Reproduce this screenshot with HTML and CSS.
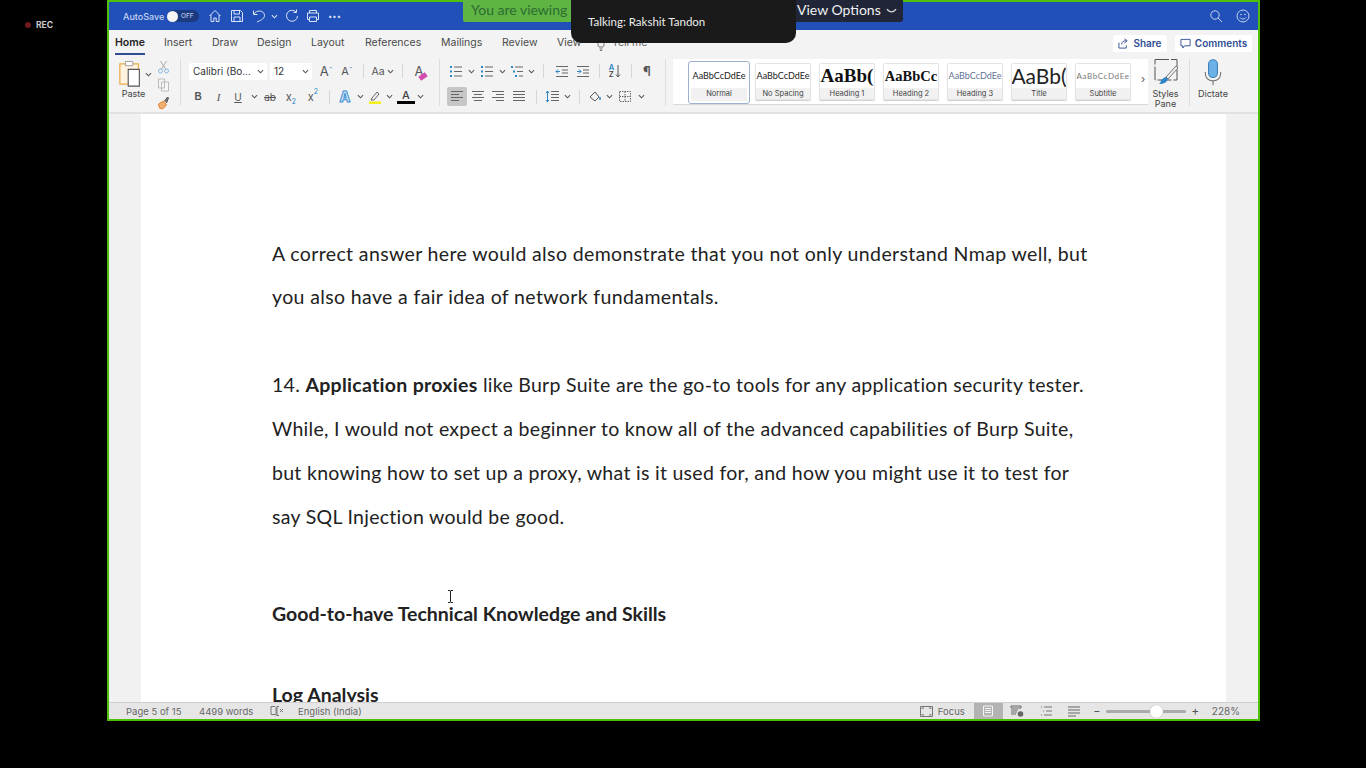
FILE: index.html
```html
<!DOCTYPE html>
<html lang="en">
<head>
<meta charset="utf-8">
<title>Word</title>
<link rel="stylesheet" href="styles.css">
</head>
<body>
<svg class="defs" width="0" height="0">
  <defs>
    <symbol id="chev" viewBox="0 0 8 5"><path d="M1 1l3 3 3-3" fill="none" stroke="#555" stroke-width="1.2"/></symbol>
    <symbol id="lines-left" viewBox="0 0 14 13"><path d="M1 1.500h12M1 4.500h8M1 7.500h12M1 10.500h8" fill="none" stroke="#666" stroke-width="1"/></symbol>
    <symbol id="lines-center" viewBox="0 0 14 13"><path d="M1 1.500h12M3 4.500h8M1 7.500h12M3 10.500h8" fill="none" stroke="#666" stroke-width="1"/></symbol>
    <symbol id="lines-right" viewBox="0 0 14 13"><path d="M1 1.500h12M5 4.500h8M1 7.500h12M5 10.500h8" fill="none" stroke="#666" stroke-width="1"/></symbol>
    <symbol id="lines-just" viewBox="0 0 14 13"><path d="M1 1.500h12M1 4.500h12M1 7.500h12M1 10.500h12" fill="none" stroke="#666" stroke-width="1"/></symbol>
  </defs>
</svg>
<div class="rec"><span class="rec-dot"></span>REC</div>
<main class="window">
  <header class="titlebar">
    <span class="autosave">AutoSave</span>
    <span class="toggle"><span class="knob"></span><span class="off">OFF</span></span>
    <svg class="ti ti-home" viewBox="0 0 14 14"><path d="M1.500 7L7 1.500 12.500 7M3 6v6.500h2.800V9h2.400v3.500H11V6" fill="none" stroke="#dbe4f7" stroke-width="1"/></svg>
    <svg class="ti ti-save" viewBox="0 0 14 14"><path d="M1.500 1.500h9l2 2v9h-11zM4 1.500v3.500h5.500v-3.500M4 12.500v-4.500h6v4.500" fill="none" stroke="#dbe4f7" stroke-width="1"/></svg>
    <svg class="ti ti-undo" viewBox="0 0 14 14"><path d="M1.500 1.500v4h4M1.700 5.300C3 3 5 2 7.500 2c3 0 5 2 5 4.500S10 11 5 13" fill="none" stroke="#dbe4f7" stroke-width="1"/></svg>
    <svg class="ti-chev" viewBox="0 0 8 5"><path d="M1 1l3 3 3-3" fill="none" stroke="#dbe4f7" stroke-width="1.200"/></svg>
    <svg class="ti ti-redo" viewBox="0 0 14 14"><path d="M11 3A5.500 5.500 0 1 0 12.500 7M11.500 .5V3.500H8.500" fill="none" stroke="#dbe4f7" stroke-width="1"/></svg>
    <svg class="ti ti-print" viewBox="0 0 14 14"><path d="M3.500 4V1.500h7V4M3.500 10.500H1.500V4h11v6.500h-2M3.500 8h7v4.500h-7z" fill="none" stroke="#dbe4f7" stroke-width="1"/></svg>
    <span class="dots">···</span>
    <span class="spacer"></span>
    <svg class="ti ti-search" viewBox="0 0 14 14"><circle cx="6" cy="6" r="4.200" fill="none" stroke="#c5d3ef" stroke-width="1"/><path d="M9 9l4 4" stroke="#c5d3ef" stroke-width="1"/></svg>
    <svg class="ti ti-smile" viewBox="0 0 14 14"><circle cx="7" cy="7" r="6" fill="none" stroke="#c5d3ef" stroke-width="1"/><circle cx="5" cy="5.500" r=".8" fill="#c5d3ef"/><circle cx="9" cy="5.500" r=".8" fill="#c5d3ef"/><path d="M4 8.500c1.500 2 4.500 2 6 0" fill="none" stroke="#c5d3ef"/></svg>
  </header>

  <nav class="tabs">
    <span class="tab tab-home">Home</span>
    <span class="tab tab-insert">Insert</span>
    <span class="tab tab-draw">Draw</span>
    <span class="tab tab-design">Design</span>
    <span class="tab tab-layout">Layout</span>
    <span class="tab tab-ref">References</span>
    <span class="tab tab-mail">Mailings</span>
    <span class="tab tab-review">Review</span>
    <span class="tab tab-view">View</span>
    <svg class="bulb" viewBox="0 0 8 12"><path d="M2 8C0 6 1 1 4 1s4 5 2 7zM2.500 10h3M3 11.500h2" fill="none" stroke="#777"/></svg>
    <span class="tab tab-tell">Tell me</span>
    <span class="spacer"></span>
    <span class="action share">
      <svg class="a-ic" viewBox="0 0 12 12"><path d="M1 5v6h8V8M4 7c0-3 2-4 5-4M7 1l3 2-3 2.500" fill="none" stroke="#2f4d92" stroke-width="1"/></svg>Share</span>
    <span class="action comments">
      <svg class="a-ic" viewBox="0 0 12 12"><path d="M1 1.500h10v7H5L3 11V8.500H1z" fill="none" stroke="#2f4d92" stroke-width="1"/></svg>Comments</span>
  </nav>

  <section class="ribbon">
    <div class="g-paste">
      <div class="paste-main">
        <div class="paste-top">
          <svg class="paste-ic" viewBox="0 0 28 30">
            <path d="M2 4h20v22H2z" fill="#fff3df" stroke="#eca94a" stroke-width="1.300"/>
            <path d="M8 1.500h8V6H8z" fill="#fff" stroke="#999"/>
            <path d="M11 10h12v18H11z" fill="#fff" stroke="#555" stroke-width="1.200"/>
          </svg>
          <svg class="chev chev-paste"><use href="#chev"/></svg>
        </div>
        <span class="paste-label">Paste</span>
      </div>
      <div class="paste-tools">
        <svg class="pt" viewBox="0 0 12 14"><path d="M3 1l5 8M9 1L4 9" stroke="#aaa" fill="none"/><circle cx="3" cy="11" r="2" fill="none" stroke="#8ab6e0"/><circle cx="9" cy="11" r="2" fill="none" stroke="#8ab6e0"/></svg>
        <svg class="pt" viewBox="0 0 12 14"><path d="M1 1h6v9H1zM4 4h7v9H4z" fill="#f6f6f6" stroke="#bbb"/></svg>
        <svg class="pt" viewBox="0 0 12 14"><path d="M1 8l5-3 3 4-4 4-3-1z" fill="#f0b070" stroke="#e0802f"/><path d="M7 5l3-4 1 1-2 5" fill="#777" stroke="#555"/></svg>
      </div>
    </div>
    <span class="vsep vsep-tall vsep-a"></span>

    <div class="g-font">
      <div class="row">
        <span class="select sel-font">Calibri (Bo...<svg class="chev"><use href="#chev"/></svg></span>
        <span class="select sel-size">12<svg class="chev"><use href="#chev"/></svg></span>
        <span class="cell c-grow">A<sup class="caret">ˆ</sup></span>
        <span class="cell c-shrink">A<sup class="caret">ˇ</sup></span>
        <span class="sep sep-a"></span>
        <span class="cell c-case">Aa</span><svg class="chev chev-case"><use href="#chev"/></svg>
        <span class="sep sep-b"></span>
        <span class="cell c-clear">A<span class="eraser"></span></span>
      </div>
      <div class="row row2">
        <span class="cell c20 bold">B</span>
        <span class="cell c21 serif-i">I</span>
        <span class="cell c18 under">U</span>
        <span class="cell c14"><svg class="chev"><use href="#chev"/></svg></span>
        <span class="cell c18 strike">ab</span>
        <span class="cell c24">x<sub class="subblue">2</sub></span>
        <span class="cell c20">x<sup class="supblue">2</sup></span>
        <span class="cell c12"><span class="sep"></span></span>
        <span class="cell c20 atext">A</span>
        <span class="cell c10"><svg class="chev"><use href="#chev"/></svg></span>
        <span class="cell c20 hl"><svg class="hl-ic" viewBox="0 0 14 14"><path d="M4 8l5-6 2 2-5 6H3z" fill="none" stroke="#666"/><path d="M1 11.500h12v2.500H1z" fill="#f3f01c"/></svg></span>
        <span class="cell c8"><svg class="chev"><use href="#chev"/></svg></span>
        <span class="cell c18 acolor">A</span>
        <span class="cell c10"><svg class="chev"><use href="#chev"/></svg></span>
      </div>
    </div>
    <span class="vsep vsep-tall vsep-b"></span>

    <div class="g-para">
      <div class="row">
        <span class="cell c18"><svg class="ric" viewBox="0 0 14 13"><path d="M5 2h8M5 6.500h8M5 11h8" stroke="#666"/><path d="M1 1h2v2H1zM1 5.500h2v2H1zM1 10h2v2H1z" fill="#2f86c6"/></svg></span>
        <span class="cell c12"><svg class="chev"><use href="#chev"/></svg></span>
        <span class="cell c20"><svg class="ric" viewBox="0 0 14 13"><path d="M5 2h8M5 6.500h8M5 11h8" stroke="#666"/><path d="M1 1h2v2H1zM1 5.500h2v2H1zM1 10h2v2H1z" fill="#2f86c6"/></svg></span>
        <span class="cell c10"><svg class="chev"><use href="#chev"/></svg></span>
        <span class="cell c20"><svg class="ric" viewBox="0 0 14 13"><path d="M5 2h8M7 6.500h6M9 11h4" stroke="#666"/><path d="M1 1h2v2H1zM3 5.500h2v2H3zM5 10h2v2H5z" fill="#2f86c6"/></svg></span>
        <span class="cell c8"><svg class="chev"><use href="#chev"/></svg></span>
        <span class="cell c16"><span class="sep"></span></span>
        <span class="cell c21"><svg class="ric" viewBox="0 0 14 13"><path d="M1 1.500h12M7 5h6M7 8h6M1 11.500h12" stroke="#666"/><path d="M5 6.500H1M3 4.500l-2 2 2 2" fill="none" stroke="#2f86c6"/></svg></span>
        <span class="cell c21"><svg class="ric" viewBox="0 0 14 13"><path d="M1 1.500h12M7 5h6M7 8h6M1 11.500h12" stroke="#666"/><path d="M1 6.500h4M3 4.500l2 2-2 2" fill="none" stroke="#2f86c6"/></svg></span>
        <span class="cell c12"><span class="sep"></span></span>
        <span class="cell c20 sort"><span class="az"><b>A</b><b>Z</b></span><svg class="sort-ar" viewBox="0 0 6 14"><path d="M3 1v12M1 10.500l2 2.500 2-2.500" fill="none" stroke="#555"/></svg></span>
        <span class="cell c12"><span class="sep"></span></span>
        <span class="cell c20 pilcrow">¶</span>
      </div>
      <div class="row row2">
        <span class="cell c20 active"><svg class="ric"><use href="#lines-left"/></svg></span>
        <span class="cell c21"><svg class="ric"><use href="#lines-center"/></svg></span>
        <span class="cell c20"><svg class="ric"><use href="#lines-right"/></svg></span>
        <span class="cell c21"><svg class="ric"><use href="#lines-just"/></svg></span>
        <span class="cell c14"><span class="sep"></span></span>
        <span class="cell c18"><svg class="ric" viewBox="0 0 14 13"><path d="M6 1.500h8M6 4.500h8M6 7.500h8M6 10.500h8" stroke="#666"/><path d="M2.500 1v11M1 3l1.500-2L4 3M1 10l1.500 2L4 10" fill="none" stroke="#2f86c6"/></svg></span>
        <span class="cell c12"><svg class="chev"><use href="#chev"/></svg></span>
        <span class="cell c12"><span class="sep"></span></span>
        <span class="cell c20"><svg class="ric" viewBox="0 0 14 13"><path d="M2 7l5-5 4 5-4 4z" fill="none" stroke="#555"/><path d="M12 7v3" stroke="#2f86c6" stroke-width="1.500"/></svg></span>
        <span class="cell c8"><svg class="chev"><use href="#chev"/></svg></span>
        <span class="cell c24"><svg class="ric" viewBox="0 0 14 13"><path d="M1.500 1.500h11v10h-11zM7 1.500v10M1.500 6.500h11" fill="none" stroke="#666" stroke-dasharray="1.500 1"/></svg></span>
        <span class="cell c8"><svg class="chev"><use href="#chev"/></svg></span>
      </div>
    </div>
    <span class="vsep vsep-tall vsep-c"></span>

    <div class="gallery">
      <div class="style selected"><span class="sample s-small">AaBbCcDdEe</span><span class="sname">Normal</span></div>
      <div class="style"><span class="sample s-small">AaBbCcDdEe</span><span class="sname">No Spacing</span></div>
      <div class="style"><span class="sample s-h1">AaBb(</span><span class="sname">Heading 1</span></div>
      <div class="style"><span class="sample s-h2">AaBbCc</span><span class="sname">Heading 2</span></div>
      <div class="style"><span class="sample s-h3">AaBbCcDdEe</span><span class="sname">Heading 3</span></div>
      <div class="style"><span class="sample s-title">AaBb(</span><span class="sname">Title</span></div>
      <div class="style"><span class="sample s-sub">AaBbCcDdEe</span><span class="sname">Subtitle</span></div>
      <span class="more">›</span>
    </div>

    <div class="big big-styles">
      <svg class="big-ic" viewBox="0 0 26 28"><path d="M2 1.500h22V22H2z" fill="none" stroke="#555" stroke-dasharray="14 2"/><path d="M23 8L13 19l2 2L25 10z" fill="#eee" stroke="#777"/><path d="M8 22c2-1 3-3 5-3l2 2c-1 3-4 5-9 5 1-1 2-2 2-4z" fill="#2f86c6"/></svg>
      <span class="big-label">Styles<br>Pane</span>
    </div>
    <span class="vsep vsep-tall vsep-d"></span>
    <div class="big big-dictate">
      <svg class="big-ic mic" viewBox="0 0 18 24"><rect x="5" y="1" width="8" height="16" rx="4" fill="#6cb1e6" stroke="#3f82ba"/><path d="M2 12c0 6 3 8 7 8s7-2 7-8M9 20v4" fill="none" stroke="#777"/></svg>
      <span class="big-label">Dictate</span>
    </div>
  </section>

  <section class="doc">
    <article class="page">
      <p class="line para-a">A correct answer here would also demonstrate that you not only understand Nmap well, but</p>
      <p class="line para-a line-tight">you also have a fair idea of network fundamentals.</p>
      <p class="line para-b gap-para">14. <b>Application proxies</b> like Burp Suite are the go-to tools for any application security tester.</p>
      <p class="line para-b">While, I would not expect a beginner to know all of the advanced capabilities of Burp Suite,</p>
      <p class="line para-b">but knowing how to set up a proxy, what is it used for, and how you might use it to test for</p>
      <p class="line para-b">say SQL Injection would be good.</p>
      <p class="line gap-head"><b>Good-to-have Technical Knowledge and Skills</b></p>
      <p class="line gap-log"><b>Log Analysis</b></p>
    </article>
  </section>

  <footer class="status">
    <span class="st st-page">Page 5 of 15</span>
    <span class="st st-words">4499 words</span>
    <svg class="st-book" viewBox="0 0 14 12"><path d="M1 1.500h4l1 1v8l-1-1H1zM9 1.500H7v9h2" fill="none" stroke="#777"/><path d="M10 4l3 3M13 4l-3 3" stroke="#777"/></svg>
    <span class="st st-lang">English (India)</span>
    <span class="spacer"></span>
    <svg class="st-focus" viewBox="0 0 13 11"><path d="M.5.500h12v10H.500z" fill="none" stroke="#777"/><path d="M2 3V2h2M9 2h2v1M2 8v1h2M9 9h2V8" fill="none" stroke="#777"/></svg>
    <span class="st st-focus-t">Focus</span>
    <span class="view-active"><svg class="st-v" viewBox="0 0 12 12"><path d="M1.500 1h9v10h-9zM3 3.500h6M3 5.500h6M3 7.500h6" fill="none" stroke="#f2f2f2"/></svg></span>
    <svg class="st-v st-web" viewBox="0 0 14 12"><path d="M1 1h10v2H1zM1 5h7M1 7h6M1 9h5" fill="none" stroke="#666"/><circle cx="10.500" cy="9" r="2.800" fill="#666"/></svg>
    <svg class="st-v st-outline" viewBox="0 0 14 12"><path d="M2 2h1M5 2h8M4 6h1M7 6h6M2 10h1M5 10h8" stroke="#777"/></svg>
    <svg class="st-v st-draft" viewBox="0 0 14 12"><path d="M1 2h12M1 5h12M1 8h12M1 11h8" stroke="#666"/></svg>
    <span class="zoom-minus">−</span>
    <span class="slider"><span class="thumb"></span></span>
    <span class="zoom-plus">+</span>
    <span class="st st-zoom">228%</span>
  </footer>
</main>

<div class="banner">You are viewing</div>
<div class="options">View Options<svg class="opt-chev" viewBox="0 0 12 6"><path d="M1 1c2 2 4 3 5 3s3-1 5-3" fill="none" stroke="#ddd" stroke-width="1.500"/></svg></div>
<div class="talking">Talking: Rakshit Tandon</div>
<svg class="ibeam" viewBox="0 0 7 13"><path d="M1 .500h2l.5.500.5-.5h2M3.500 1v11M1 12.500h2l.5-.5.500.5h2" fill="none" stroke="#222"/></svg>
</body>
</html>
```

FILE: styles.css
```css
* { box-sizing: border-box; }
html, body { margin: 0; height: 100%; }
body {
  background: #000;
  width: 1366px;
  height: 768px;
  overflow: hidden;
  position: relative;
  font-family: Inter, "Liberation Sans", sans-serif;
  color: #444;
}
.defs { position: absolute; }
.spacer { flex: 1; }
svg { display: block; flex: none; }

.rec {
  position: absolute; left: 25px; top: 20px;
  display: flex; align-items: center; gap: 5px;
  font: 700 8.5px Inter, sans-serif; color: #c9c9c9;
}
.rec-dot { width: 6px; height: 6px; border-radius: 50%; background: #6e1a1e; }

.window {
  margin-left: 107px;
  width: 1153px;
  height: 721px;
  border: 2px solid #4fc00a;
  display: flex;
  flex-direction: column;
  background: #f3f3f3;
}

/* title bar */
.titlebar {
  height: 28px; flex: none;
  background: #2150b8;
  display: flex; align-items: center;
  padding-left: 14px;
  padding-right: 8px;
}
.autosave { font-size: 9px; font-weight: 500; color: #c6d4f1; width: 44px; }
.toggle {
  width: 32px; height: 12px; border-radius: 6px; background: #1b3a80;
  display: flex; align-items: center; gap: 3px;
}
.knob { width: 11px; height: 11px; border-radius: 50%; background: #f4f4f4; }
.off { font-size: 6.5px; font-weight: 500; color: #b9c8e8; }
.ti { width: 14px; height: 14px; }
.ti-home { margin-left: 9px; }
.ti-save { margin-left: 8px; }
.ti-undo { margin-left: 8px; }
.ti-chev { width: 7px; height: 5px; margin-left: 5px; }
.ti-redo { margin-left: 7px; }
.ti-print { margin-left: 7px; }
.dots { margin-left: 8px; color: #dbe4f7; font-size: 13px; font-weight: 700; line-height: 1; width: 16px; }
.ti-smile { margin-left: 13px; }

/* tabs */
.tabs {
  height: 26px; flex: none;
  display: flex; align-items: center;
  padding-left: 6px; padding-right: 6px;
  background: #f3f3f3;
  font-size: 10.5px;
}
.tab { color: #4a4a4a; flex: none; line-height: 26px; position: relative; }
.tab-home { width: 49px; color: #222; font-weight: 600; }
.tab-home::after {
  content: ""; position: absolute; left: 0; width: 30px; bottom: 1px; height: 2px; background: #2f4d92;
}
.tab-insert { width: 48px; }
.tab-draw { width: 45px; }
.tab-design { width: 54px; }
.tab-layout { width: 54px; }
.tab-ref { width: 76px; }
.tab-mail { width: 61px; }
.tab-review { width: 55px; }
.tab-view { width: 40px; }
.bulb { width: 8px; height: 12px; margin-top: 4px; margin-right: 7px; }
.tab-tell { width: 40px; color: #666; }
.action {
  height: 17px; background: #fff; border-radius: 2px;
  display: flex; align-items: center; gap: 4px;
  font-size: 10px; font-weight: 600; color: #2f4d92;
  justify-content: center;
}
.share { width: 54px; margin-right: 8px; }
.comments { width: 77px; }
.a-ic { width: 11px; height: 11px; }

/* ribbon */
.ribbon {
  height: 58px; flex: none;
  background: #f3f3f3;
  border-bottom: 2px solid #e2e2e2;
  display: flex;
  align-items: flex-start;
  padding-left: 6px;
  font-size: 10px;
}
.vsep { display: block; width: 1px; background: #dddddd; flex: none; }
.vsep-tall { height: 47px; margin-top: 3px; }
.vsep-a { margin-left: 0; }
.vsep-b { margin-left: 6px; }
.vsep-c { margin-left: 9px; }
.vsep-d { margin-left: 6px; }

.g-paste { width: 65px; display: flex; padding-top: 4px; }
.paste-main { width: 40px; display: flex; flex-direction: column; align-items: center; }
.paste-top { display: flex; align-items: center; width: 40px; padding-left: 3px; gap: 1px; }
.paste-ic { width: 26px; height: 28px; }
.chev-paste { width: 7px; height: 5px; }
.paste-label { font-size: 9px; color: #444; margin-left: -3px; }
.paste-tools { display: flex; flex-direction: column; gap: 4px; margin-left: 2px; }
.pt { width: 13px; height: 14px; }

.g-font { width: 245px; margin-left: 7px; padding-top: 7px; }
.g-para { width: 209px; margin-left: 7px; padding-top: 7px; }
.row { display: flex; align-items: center; height: 16px; }
.row2 { margin-top: 8px; height: 19px; }
.chev { width: 7px; height: 5px; }
.select {
  height: 17px; background: #fff; border-radius: 2px;
  display: flex; align-items: center; justify-content: space-between;
  padding: 0 3px 0 4px; font-size: 10px; color: #333; flex: none;
}
.sel-font { width: 78px; margin-left: 1px; }
.sel-size { width: 42px; margin-left: 3px; }
.cell { display: flex; align-items: center; justify-content: center; flex: none; height: 19px; position: relative; color: #555; font-size: 11px; }
.c8 { width: 8px; } .c10 { width: 10px; } .c12 { width: 12px; } .c14 { width: 14px; }
.c16 { width: 16px; } .c18 { width: 18px; } .c20 { width: 20px; } .c21 { width: 21px; } .c24 { width: 24px; }
.c-grow { width: 20px; margin-left: 4px; font-size: 13px; }
.c-shrink { width: 20px; margin-left: 1px; font-size: 11px; }
.caret { font-size: 9px; color: #5b8fc7; line-height: 0; }
.c-case { width: 18px; margin-left: 5px; font-size: 10.5px; }
.chev-case { margin-left: 0; }
.sep { display: block; width: 1px; height: 14px; background: #d6d6d6; flex: none; }
.sep-a { margin-left: 6px; }
.sep-b { margin-left: 8px; }
.c-clear { width: 20px; margin-left: 6px; font-size: 13px; }
.eraser { position: absolute; right: 2px; bottom: 2px; width: 8px; height: 5px; background: #d14bb1; transform: rotate(-35deg); }
.bold { font-weight: 700; font-size: 10px; font-family: "Liberation Sans", sans-serif; }
.serif-i { font-style: italic; font-family: "Liberation Serif", serif; font-size: 11px; }
.under { text-decoration: underline; font-size: 10px; }
.strike { text-decoration: line-through; font-size: 10px; }
.subblue { font-size: 7px; color: #2f86c6; line-height: 0; align-self: flex-end; margin-bottom: 4px; }
.supblue { font-size: 7px; color: #2f86c6; line-height: 0; align-self: flex-start; margin-top: 5px; }
.atext { font-size: 14px; font-weight: 800; color: #cfe4f7; -webkit-text-stroke: 1px #3f8fd6; }
.acolor { font-size: 11px; font-weight: 500; color: #444; border-bottom: 3px solid #000; height: 15px; line-height: 12px; margin-left: 4px; }
.hl-ic { width: 14px; height: 14px; }
.ric { width: 14px; height: 13px; }
.active { background: #c6c6c6; border-radius: 2px; }
.sort { gap: 1px; }
.az { display: flex; flex-direction: column; font-size: 7.5px; line-height: 7px; }
.az b:first-child { color: #2f86c6; font-weight: 600; }
.az b:last-child { color: #444; font-weight: 600; }
.sort-ar { width: 6px; height: 14px; }
.pilcrow { font-size: 13px; font-weight: 600; }

.gallery {
  width: 475px; height: 46px; margin-left: 7px; margin-top: 3px;
  background: #fff; border-bottom: 1px solid #d8d8d8;
  display: flex; padding: 4px 0 0 15px; gap: 8px; position: relative;
  flex: none;
}
.style {
  width: 56px; height: 37px; background: #fff;
  border: 1px solid #e4e4e4; border-radius: 2px;
  box-shadow: 0 1px 1px #cfcfcf;
  display: flex; flex-direction: column; align-items: center;
  overflow: hidden;
}
.selected {
  width: 62px; height: 43px; margin-top: -2px; margin-right: -3px;
  border: 1px solid #9db1cf; padding: 2px; box-shadow: none; border-radius: 3px;
}
.sample { height: 24px; line-height: 24px; white-space: nowrap; color: #222; flex: none; }
.s-small { font: 400 9px/24px Lato, sans-serif; }
.s-h1 { font: 700 19px/24px "Liberation Serif", serif; color: #111; }
.s-h2 { font: 700 14.5px/24px "Liberation Serif", serif; color: #111; }
.s-h3 { font: 400 9px/24px Lato, sans-serif; color: #5f7396; }
.s-title { font: 400 21px/24px Lato, sans-serif; color: #222; }
.s-sub { font: 400 8px/24px Lato, sans-serif; letter-spacing: .6px; color: #777; }
.sname { flex: 1; width: 100%; background: #f1f1f1; text-align: center; font-size: 7.5px; line-height: 12px; color: #444; }
.more { position: absolute; left: 468px; top: 13px; font-size: 11px; color: #555; }

.big { display: flex; flex-direction: column; align-items: center; flex: none; }
.big-styles { width: 35px; padding-top: 2px; }
.big-dictate { width: 46px; padding-top: 2px; }
.big-ic { width: 26px; height: 28px; }
.mic { height: 28px; width: 20px; }
.big-label { font-size: 9px; line-height: 10px; text-align: center; margin-top: 3px; color: #444; }

/* document */
.doc {
  flex: 1; min-height: 0;
  padding-left: 32px; padding-right: 32px;
  background: #f1f1f1;
  overflow: hidden;
}
.page {
  background: #fff; height: 100%;
  padding: 118px 0 0 131px;
  font-family: Lato, sans-serif;
  font-size: 19.5px;
  color: #222;
  overflow: hidden;
}
.line { margin: 0; line-height: 43.800px; white-space: nowrap; }
.para-a { letter-spacing: .37px; }
.para-b { letter-spacing: .29px; }
.line-tight { margin-top: -.6px; }
.gap-para { margin-top: 44.400px; }
.gap-head { margin-top: 53px; }
.gap-log { margin-top: 38px; }

/* status bar */
.status {
  height: 17px; flex: none;
  background: #e6e6e6; border-top: 1px solid #cfcfcf;
  display: flex; align-items: center;
  padding-left: 17px; padding-right: 18px;
  font-size: 9.5px;
}
.st { color: #666; flex: none; }
.st-page { width: 73px; }
.st-words { width: 71px; }
.st-book { width: 14px; height: 12px; }
.st-lang { margin-left: 14px; }
.st-focus { width: 13px; height: 11px; }
.st-focus-t { margin-left: 5px; width: 36px; }
.view-active { width: 29px; height: 16px; background: #b3b3b3; display: flex; align-items: center; justify-content: center; }
.st-v { width: 14px; height: 12px; }
.st-web { margin-left: 7px; }
.st-outline { margin-left: 15px; }
.st-draft { margin-left: 14px; }
.zoom-minus { margin-left: 12px; width: 8px; font-size: 11px; color: #555; line-height: 1; text-align: center; }
.slider { margin-left: 5px; width: 80px; height: 3px; background: #aaa; border-radius: 2px; position: relative; }
.thumb { position: absolute; left: 44px; top: -5px; width: 13px; height: 13px; border-radius: 50%; background: #fff; box-shadow: 0 0 1px #999; }
.zoom-plus { margin-left: 5px; width: 9px; font-size: 12px; color: #555; line-height: 1; text-align: center; }
.st-zoom { margin-left: 12px; font-size: 10px; }

/* overlays */
.banner {
  position: absolute; left: 463px; top: 0; width: 120px; height: 22px;
  background: #5fb544; border-radius: 0 0 2px 2px; color: #2d6b31;
  font: 400 14px/20px Lato, sans-serif; padding-left: 8px; white-space: nowrap;
}
.options {
  position: absolute; left: 790px; top: 0; width: 113px; height: 22px;
  background: #202637; border-radius: 0 0 3px 3px; color: #f0f0f0;
  font: 400 14px/20px Lato, sans-serif; padding-left: 7px;
  display: flex; align-items: flex-start; gap: 5px;
}
.opt-chev { width: 11px; height: 6px; margin-top: 8px; }
.talking {
  position: absolute; left: 571px; top: 0; width: 225px; height: 43px;
  background: #1a1a1a; border-radius: 0 0 10px 10px; color: #eee;
  font: 400 11.500px/44px Lato, sans-serif; padding-left: 17px;
}
.ibeam { position: absolute; left: 447px; top: 590px; width: 7px; height: 13px; }
```
